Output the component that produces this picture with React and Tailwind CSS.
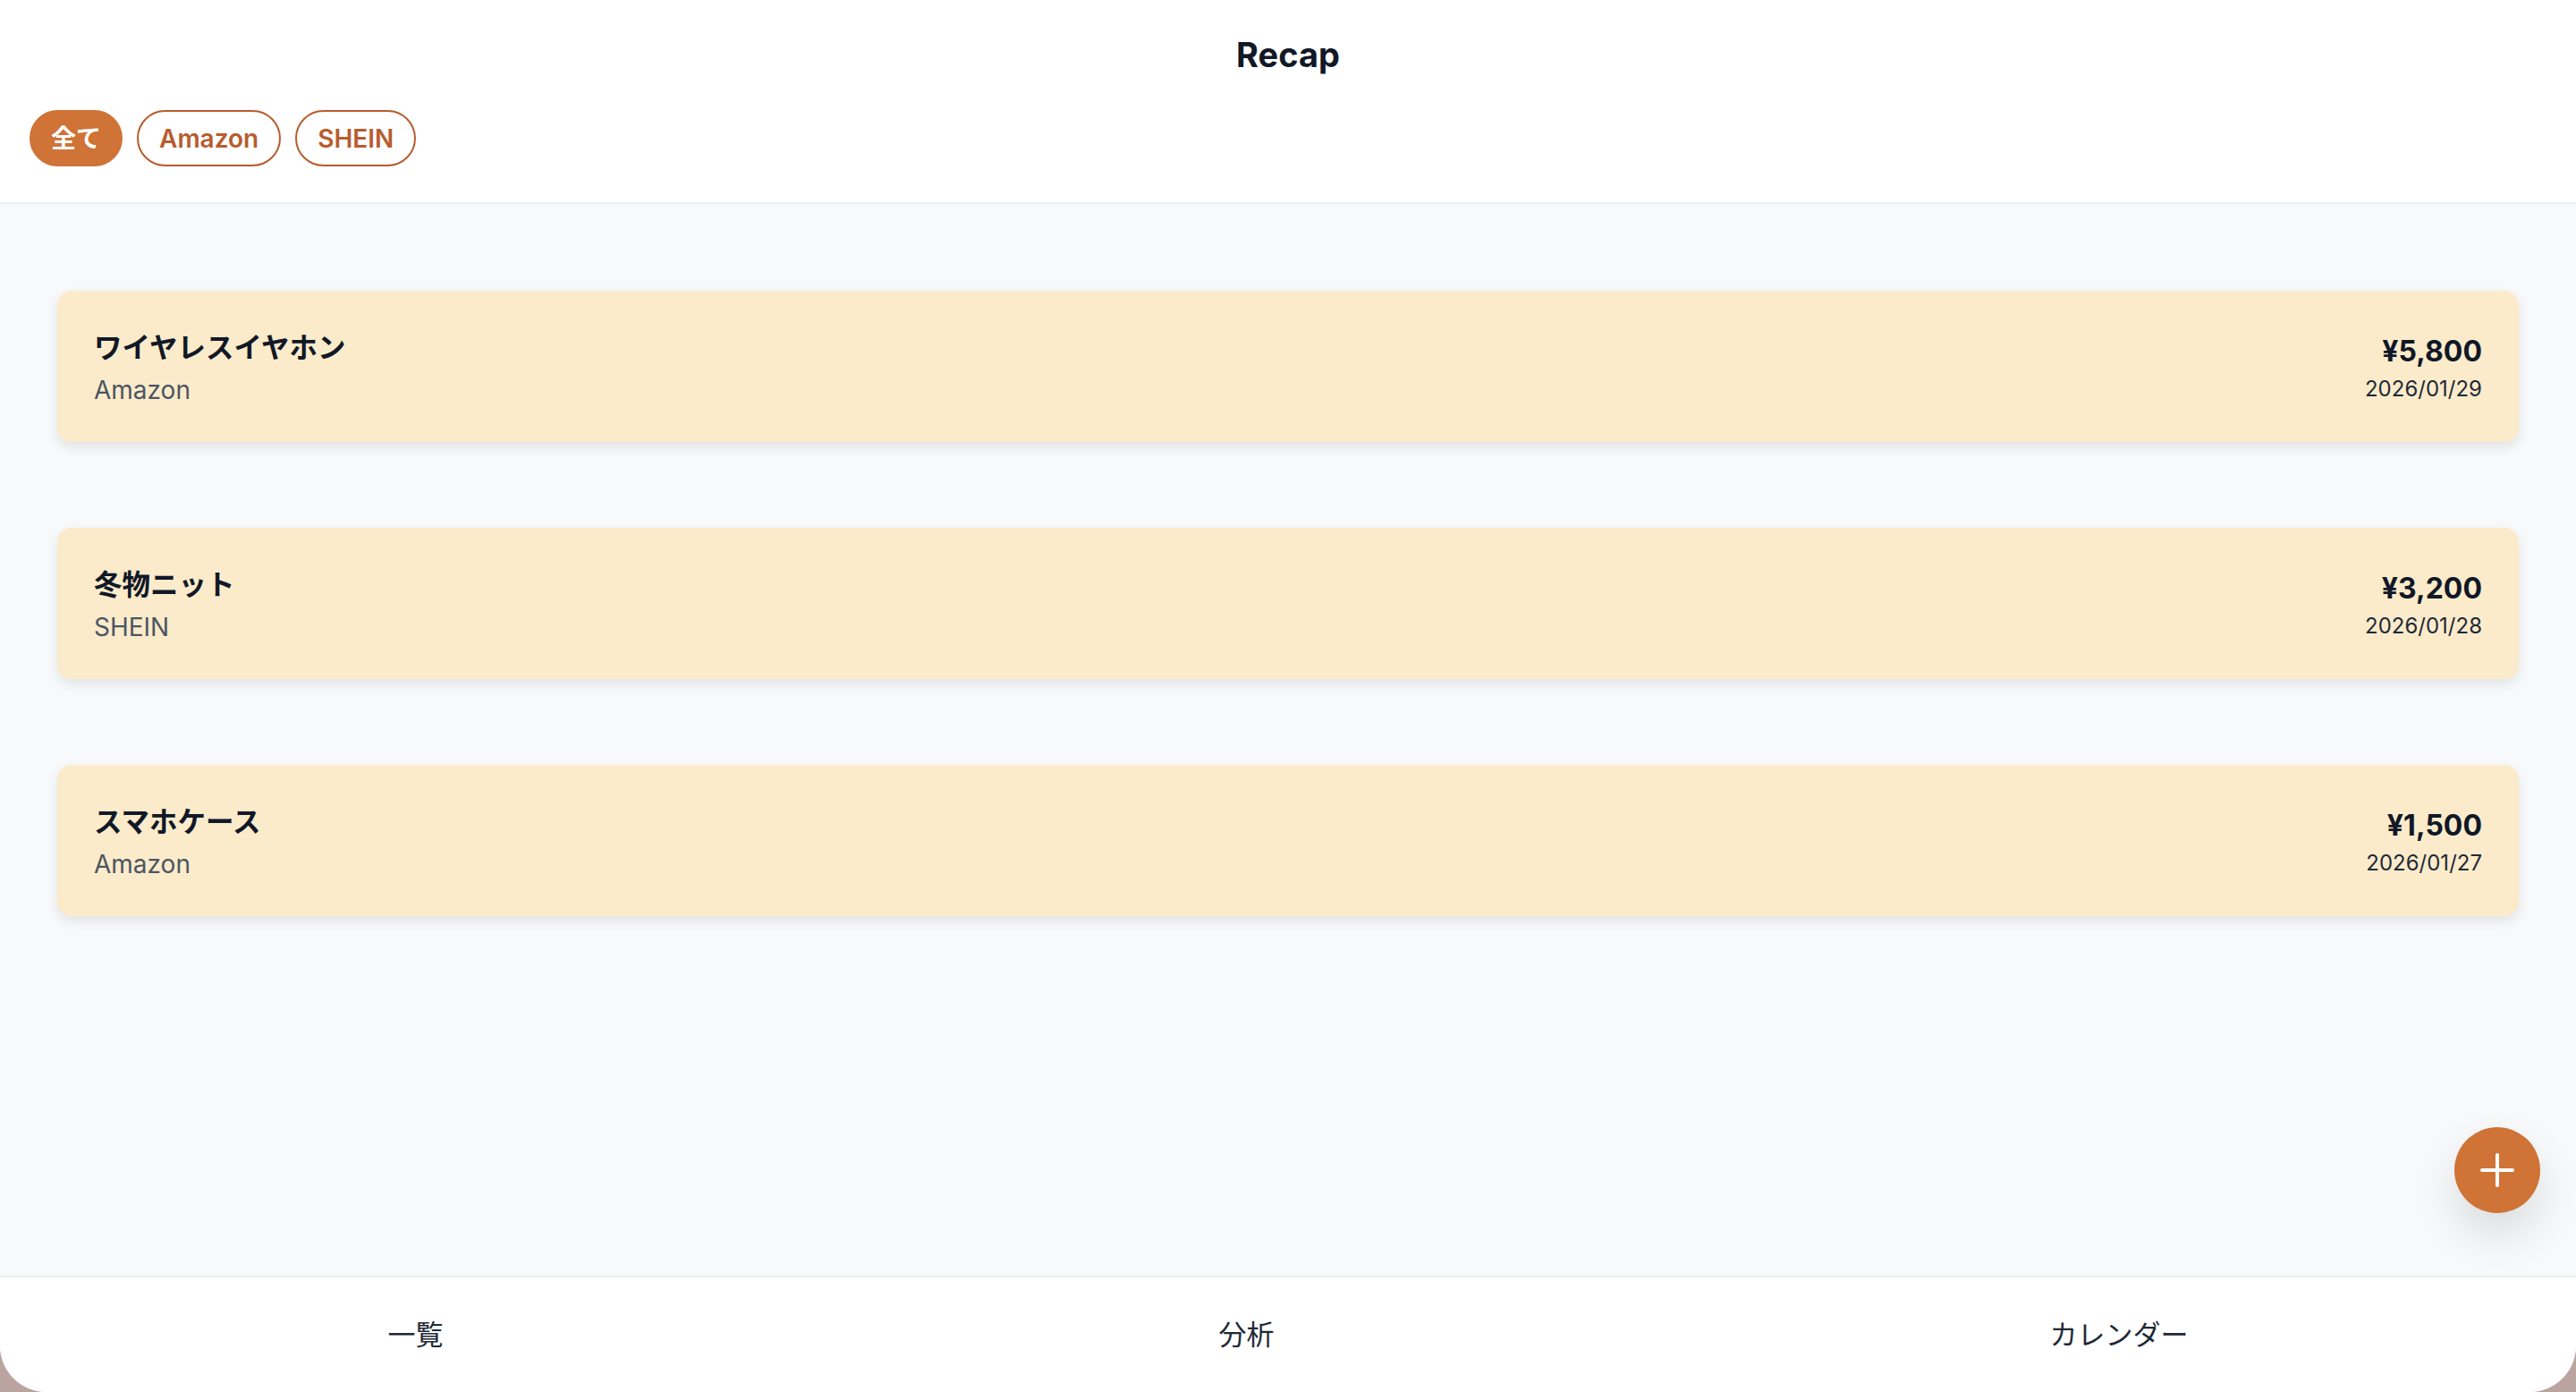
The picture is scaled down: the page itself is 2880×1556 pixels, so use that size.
import React from "react";

const font = { fontFamily: '"Inter", "Noto Sans CJK JP", sans-serif' };

const items = [
  { name: "ワイヤレスイヤホン", shop: "Amazon", price: "¥5,800", date: "2026/01/29" },
  { name: "冬物ニット", shop: "SHEIN", price: "¥3,200", date: "2026/01/28" },
  { name: "スマホケース", shop: "Amazon", price: "¥1,500", date: "2026/01/27" },
];

function Card({ item }) {
  return (
    <div className="flex h-[169px] items-center justify-between rounded-[16px] bg-[#fbebca] px-[41px] shadow-[0_6px_14px_rgba(0,0,0,0.09)]">
      <div className="flex flex-col pt-[5px]">
        <div className="text-[31.5px] font-bold leading-[48px] text-[#111827]">{item.name}</div>
        <div className="text-[28px] leading-[46px] text-[#4b5563]">{item.shop}</div>
      </div>
      <div className="flex flex-col items-end pt-[7px]">
        <div className="text-[32px] font-bold leading-[44px] text-[#111827]">{item.price}</div>
        <div className="text-[24px] leading-[40px] text-[#1f2937]">{item.date}</div>
      </div>
    </div>
  );
}

export default function App() {
  return (
    <div className="h-[1556px] w-full bg-[#bba39f]" style={font}>
      <div className="relative flex h-full flex-col overflow-hidden rounded-b-[52px] bg-white">
        <header className="flex flex-col border-b-2 border-[#eceef1] bg-white px-[33px] pb-[40px] pt-[36px]">
          <h1 className="text-center text-[38px] font-bold leading-[50px] text-[#111827]">Recap</h1>
          <div className="mt-[37px] flex gap-[16px]">
            <button className="flex h-[63px] items-center rounded-full border-2 border-[#cf7336] bg-[#cf7336] px-[22px] text-[28px] font-semibold text-white">
              全て
            </button>
            <button className="flex h-[63px] items-center rounded-full border-2 border-[#b85c2e] bg-white px-[23px] text-[28px] font-semibold text-[#b85c2e]">
              Amazon
            </button>
            <button className="flex h-[63px] items-center rounded-full border-2 border-[#b85c2e] bg-white px-[23px] text-[28px] font-semibold text-[#b85c2e]">
              SHEIN
            </button>
          </div>
        </header>

        <main className="flex flex-1 flex-col gap-[96px] bg-[#f8f9fb] px-[64px] pt-[97px]">
          {items.map((it) => (
            <Card key={it.name} item={it} />
          ))}
        </main>

        <nav className="flex h-[130px] border-t-2 border-[#eceef1] bg-white">
          <div className="flex grow items-center justify-center text-[31px] text-[#1f2937]">一覧</div>
          <div className="flex grow items-center justify-center text-[31px] text-[#1f2937]">分析</div>
          <div className="flex grow items-center justify-center text-[31px] text-[#1f2937]">カレンダー</div>
        </nav>

        <button className="absolute bottom-[200px] right-[40px] flex h-[96px] w-[96px] items-center justify-center rounded-full bg-[#cf7336] shadow-[0_24px_50px_rgba(0,0,0,0.12)]">
          <svg width="38" height="38" viewBox="0 0 38 38" fill="none" stroke="white" strokeWidth="4" strokeLinecap="round">
            <path d="M19 2v34M2 19h34" />
          </svg>
        </button>
      </div>
    </div>
  );
}
